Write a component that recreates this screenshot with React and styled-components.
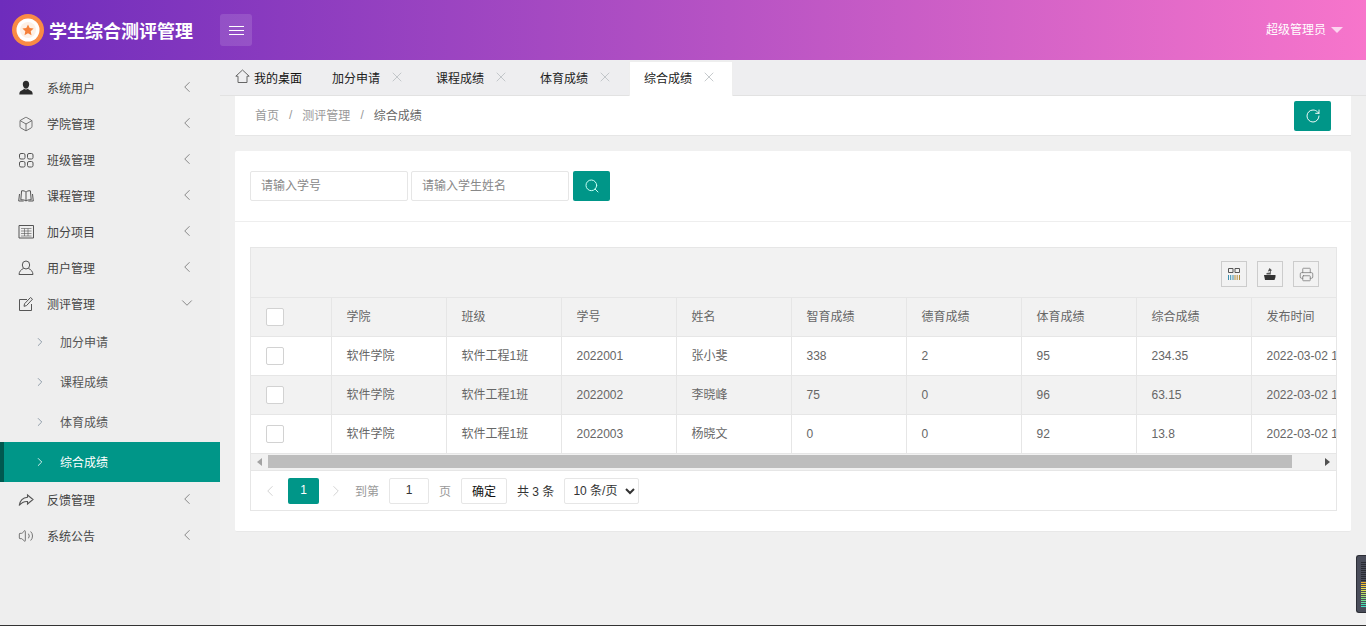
import styled, { createGlobalStyle } from 'styled-components';
import { ChevronLeft, ChevronRight, ChevronDown, X, RotateCw, Search, Box, Volume2, Printer } from 'lucide-react';

const GlobalStyle = createGlobalStyle`
  html, body { margin: 0; padding: 0; height: 100%; overflow: hidden; background: #f0f0f0; }
  body { font-family: "Liberation Sans", "Noto Sans CJK SC", sans-serif; font-size: 12px; color: #666; }
  * { box-sizing: border-box; }
`;

const Page = styled.div`
  width: 1366px;
  height: 626px;
  display: flex;
  flex-direction: column;
  overflow: hidden;
  border-bottom: 1px solid #333;
`;

const Header = styled.header`
  height: 60px;
  flex: none;
  display: flex;
  align-items: center;
  padding: 0 23px 0 12px;
  background: linear-gradient(90deg, #6e2cbc 0%, #f775cb 100%);
  color: #fff;
`;
const Logo = styled.svg`
  width: 32px;
  height: 32px;
  flex: none;
`;
const Brand = styled.div`
  width: 171px;
  margin-left: 5px;
  font-size: 18px;
  font-weight: 700;
  white-space: nowrap;
`;
const MenuButton = styled.button`
  width: 32px;
  height: 32px;
  padding: 0;
  display: flex;
  flex-direction: column;
  align-items: center;
  justify-content: center;
  gap: 3px;
  border: 0;
  border-radius: 3px;
  background: rgba(255, 255, 255, 0.13);
  span { width: 15px; height: 1px; background: #fff; }
`;
const UserBox = styled.div`
  margin-left: auto;
  padding-bottom: 3px;
  display: flex;
  align-items: center;
  gap: 5px;
`;
const Caret = styled.i`
  width: 0;
  height: 0;
  margin-top: 3px;
  border-style: solid;
  border-width: 6px 6px 0;
  border-color: rgba(255, 255, 255, 0.7) transparent transparent;
`;

const Body = styled.div`
  flex: 1;
  min-height: 0;
  display: flex;
`;

const Sidebar = styled.aside`
  width: 220px;
  flex: none;
  padding-top: 10px;
  background: #eee;
`;
const MenuRow = styled.div`
  height: 36px;
  display: flex;
  align-items: center;
  padding: 0 24px 0 18px;
  color: #444;
  svg.icon { width: 16px; height: 16px; flex: none; color: #555; }
  span { margin-left: 13px; flex: 1; padding-bottom: 2px; }
  svg.arrow { color: #666; margin-top: -3px; }
`;
const SubRow = styled.div`
  height: 40px;
  display: flex;
  align-items: center;
  padding-left: ${(p) => (p.$active ? '29px' : '33px')};
  color: ${(p) => (p.$active ? '#fff' : '#555')};
  background: ${(p) => (p.$active ? '#009688' : 'transparent')};
  border-left: ${(p) => (p.$active ? '4px solid #00594f' : '0')};
  svg { flex: none; color: ${(p) => (p.$active ? '#fff' : '#7c8c9a')}; }
  span { margin-left: 13px; padding-bottom: 2px; }
`;

const Main = styled.main`
  flex: 1;
  min-width: 0;
  display: flex;
  flex-direction: column;
`;
const TabBar = styled.div`
  height: 36px;
  flex: none;
  display: flex;
  padding-top: 2px;
  background: #eeeef0;
  border-bottom: 1px solid #e2e2e2;
`;
const HomeTab = styled.div`
  width: 98px;
  display: flex;
  align-items: center;
  gap: 4px;
  padding: 0 0 3px 15px;
  color: #111;
  svg { color: #666; margin-top: -2px; }
`;
const Tab = styled.div`
  width: 102px;
  height: ${(p) => (p.$active ? '35px' : '33px')};
  margin-right: 2px;
  display: flex;
  align-items: center;
  padding: 0 0 ${(p) => (p.$active ? '5px' : '3px')} 14px;
  color: #222;
  background: ${(p) => (p.$active ? '#fff' : 'transparent')};
  box-shadow: ${(p) => (p.$active ? '0 0 0 1px #eee' : 'none')};
  svg { margin-left: 9px; color: #b8bcc0; }
`;

const Content = styled.div`
  flex: 1;
  padding: 0 15px;
  background: #f0f0f0;
`;
const Crumbs = styled.div`
  height: 40px;
  display: flex;
  align-items: center;
  padding: 0 20px;
  background: #fff;
  border-bottom: 1px solid #e6e6e6;
  color: #999;
`;
const CrumbText = styled.span`
  padding-bottom: 2px;
  color: ${(p) => (p.$current ? '#666' : '#999')};
`;
const Sep = styled.span`
  margin: 0 10px;
  padding-bottom: 2px;
  color: #999;
`;
const TealButton = styled.button`
  width: 37px;
  height: 30px;
  padding: 0;
  display: flex;
  align-items: center;
  justify-content: center;
  border: 0;
  border-radius: 2px;
  color: #fff;
  background: #009688;
`;
const RefreshButton = styled(TealButton)`
  margin-left: auto;
`;

const Card = styled.section`
  margin-top: 15px;
  height: 381px;
  background: #fff;
  border-radius: 2px;
  border-bottom: 1px solid #e8e8e8;
`;
const SearchBar = styled.div`
  height: 71px;
  display: flex;
  align-items: center;
  padding: 0 15px 1px;
  border-bottom: 1px solid #eee;
`;
const SearchInput = styled.input`
  width: 158px;
  height: 30px;
  margin-right: 3px;
  padding: 0 10px;
  border: 1px solid #e6e6e6;
  border-radius: 2px;
  font: inherit;
  color: #666;
  outline: none;
  &::placeholder { color: #888; opacity: 1; }
`;
const SearchButton = styled(TealButton)`
  margin-left: 1px;
  color: #c8fff5;
`;

const TableBox = styled.div`
  width: 1087px;
  margin: 25px 0 0 15px;
  border: 1px solid #e6e6e6;
`;
const Toolbar = styled.div`
  height: 50px;
  display: flex;
  align-items: center;
  justify-content: flex-end;
  gap: 10px;
  padding: 3px 17px 0 0;
  background: #f2f2f2;
  border-bottom: 1px solid #e6e6e6;
`;
const ToolButton = styled.div`
  width: 26px;
  height: 26px;
  display: flex;
  align-items: center;
  justify-content: center;
  border: 1px solid #ccc;
  color: #555;
`;
const TableClip = styled.div`
  overflow: hidden;
`;
const Table = styled.table`
  width: 1200px;
  table-layout: fixed;
  border-collapse: collapse;
`;
const Col = styled.col`
  width: ${(p) => p.$w}px;
`;
const Cell = styled.td`
  height: 39px;
  padding: 0 15px;
  line-height: 18px;
  border-right: 1px solid #e6e6e6;
  border-bottom: 1px solid #e6e6e6;
  color: #666;
  white-space: nowrap;
  overflow: hidden;
  &:last-child { border-right: 0; }
`;
const HeadRow = styled.tr`
  background: #f2f2f2;
  td { height: 38px; }
`;
const Row = styled.tr`
  background: ${(p) => (p.$alt ? '#f2f2f2' : '#fff')};
`;
const CheckBox = styled.i`
  display: block;
  width: 18px;
  height: 18px;
  background: #fff;
  border: 1px solid #d2d2d2;
  border-radius: 2px;
`;

const ScrollTrack = styled.div`
  height: 17px;
  display: flex;
  align-items: center;
  background: #f1f1f1;
  border-bottom: 1px solid #e6e6e6;
`;
const ScrollArrow = styled.div`
  width: 17px;
  flex: none;
  display: flex;
  justify-content: center;
  i {
    width: 0;
    height: 0;
    border-style: solid;
    border-width: ${(p) => (p.$right ? '4px 0 4px 5px' : '4px 5px 4px 0')};
    border-color: ${(p) => (p.$right ? 'transparent transparent transparent #505050' : 'transparent #a3a3a3 transparent transparent')};
  }
`;
const ScrollThumb = styled.div`
  flex: 1;
  height: 13px;
  margin-right: 27px;
  background: #bdbdbd;
`;

const Pager = styled.div`
  height: 39px;
  display: flex;
  align-items: center;
  padding: 2px 0 0 10px;
  color: #999;
`;
const PageArrow = styled.div`
  width: ${(p) => (p.$next ? '26px' : '27px')};
  display: flex;
  justify-content: ${(p) => (p.$next ? 'flex-end' : 'flex-start')};
  color: #cfcfcf;
`;
const PageNum = styled.div`
  width: 31px;
  height: 26px;
  padding-bottom: 2px;
  display: flex;
  align-items: center;
  justify-content: center;
  border-radius: 2px;
  background: #009688;
  color: #fff;
`;
const PageLabel = styled.span`
  margin: 0 10px;
  padding-bottom: 2px;
  color: ${(p) => (p.$dark ? '#333' : '#999')};
`;
const PageInput = styled.input`
  width: 40px;
  height: 26px;
  border: 1px solid #e6e6e6;
  border-radius: 2px;
  padding: 0 0 2px;
  text-align: center;
  font: inherit;
  color: #333;
  outline: none;
`;
const ConfirmButton = styled.button`
  width: 46px;
  height: 26px;
  padding: 0 0 2px;
  background: #fff;
  border: 1px solid #e6e6e6;
  border-radius: 2px;
  font: inherit;
  color: #111;
`;
const SizeSelect = styled.select`
  width: 75px;
  height: 26px;
  padding: 0 0 0 4px;
  background: #fff;
  border: 1px solid #e6e6e6;
  border-radius: 2px;
  font: inherit;
  color: #333;
  outline: none;
`;

const Meter = styled.div`
  position: absolute;
  left: 1356px;
  top: 555px;
  width: 10px;
  height: 58px;
  display: flex;
  flex-direction: column;
  gap: 1px;
  padding: 6px 0 0 4px;
  background: #4a4d5a;
  border: 1px solid #2c2e36;
  border-right: 0;
  border-radius: 3px 0 0 3px;
`;
const MeterBar = styled.i`
  display: block;
  height: 1px;
  background: ${(p) => p.$color};
`;

const PersonFilled = () => (
  <svg className="icon" viewBox="0 0 16 16" fill="#2b2b2b">
    <path d="M8 .8c2 0 3.200 1.500 3.200 3.500S10 8.700 8 8.700 4.800 6.300 4.800 4.300 6 .8 8 .8zM5.900 8.600c.6.6 1.300 1 2.100 1s1.500-.4 2.100-1c.2 1 .5 1.300 2.300 2 1.500.6 2.200 1.300 2.300 3.900H1.300c.1-2.600.8-3.300 2.300-3.900 1.800-.7 2.100-1 2.300-2z" />
  </svg>
);
const GridIcon = () => (
  <svg className="icon" viewBox="0 0 16 16" fill="none" stroke="currentColor" strokeWidth="1">
    <rect x="1.500" y="1.500" width="5.500" height="5.500" rx="1.500" />
    <rect x="9.500" y="1.500" width="5.500" height="5.500" rx="1.500" />
    <rect x="1.500" y="9.500" width="5.500" height="5.500" rx="1.500" />
    <rect x="9.500" y="9.500" width="5.500" height="5.500" rx="1.500" />
  </svg>
);
const BookIcon = () => (
  <svg className="icon" viewBox="0 0 16 16" fill="none" stroke="currentColor" strokeWidth="1">
    <path d="M8 4.200C7 3 5.600 2.600 3.600 2.800L2.800 11.800c2-.2 3.800.1 5.200 1.200 1.400-1.100 3.200-1.400 5.200-1.200L12.400 2.800C10.400 2.600 9 3 8 4.200zM8 4.200V13" />
    <path d="M1.500 6L.7 13h5M14.500 6l.8 7h-5" />
  </svg>
);
const TableIcon = () => (
  <svg className="icon" viewBox="0 0 16 16" fill="none" stroke="currentColor" strokeWidth="1">
    <path d="M1 1.500h14.500v12.500H1z" />
    <path d="M3 4.500h10.500M3 7h10.500M3 9.500h10.500M3 12h10.500M6.500 4.500v7.500M10 4.500v7.500" opacity=".6" />
  </svg>
);
const PersonOutline = () => (
  <svg className="icon" viewBox="0 0 16 16" fill="none" stroke="currentColor" strokeWidth="1">
    <ellipse cx="8" cy="5" rx="3.700" ry="4" />
    <path d="M5.500 8.500C3 9.500 1.200 11.500 1 14.500h14C14.800 11.500 13 9.500 10.500 8.500" />
  </svg>
);
const EditIcon = () => (
  <svg className="icon" viewBox="0 0 16 16" fill="none" stroke="currentColor" strokeWidth="1">
    <path d="M9 3.500H1.500v11h12V8" />
    <path d="M6 10.300l.5-2.500 6-6.300 2 1.700-6 6.400z" />
  </svg>
);
const ShareIcon = () => (
  <svg className="icon" viewBox="0 0 16 16" fill="none" stroke="currentColor" strokeWidth="1.100">
    <path d="M9.500 3l5.500 4.500L9.500 12V9.500C6 9.300 3.500 10.500 1.200 13.500 2 8.500 5 5.700 9.500 5.300z" />
  </svg>
);
const HomeIcon = () => (
  <svg width="15" height="15" viewBox="0 0 15 15" fill="none" stroke="currentColor" strokeWidth="1">
    <path d="M7.500 1L.8 7.200h2.200v6.300h9V7.200h2.200z" />
  </svg>
);
const ColsIcon = () => (
  <svg width="14" height="14" viewBox="0 0 14 14" fill="none" stroke="#555">
    <path d="M1.500 1.500h4.500v4H1.500zM8 1.500h4.500v4H8z" />
    <path d="M1.500 8v5M3.700 8v5M6 8v5" stroke="#3a8fb0" />
    <path d="M8 8v5M10.200 8v5M12.500 8v5" stroke="#b08a3a" />
  </svg>
);
const ExportIcon = () => (
  <svg width="14" height="14" viewBox="0 0 14 14">
    <path d="M1 8h11.500v2l-1 3H2z" fill="#333" />
    <path d="M3.500 7.500V6l3.500-.5V4L4.800 4.500 6.500 1 9 3.300 7.800 4v3.500z" fill="#555" />
  </svg>
);

const menuTop = [
  { name: '系统用户', icon: <PersonFilled /> },
  { name: '学院管理', icon: <Box className="icon" strokeWidth={1.2} /> },
  { name: '班级管理', icon: <GridIcon /> },
  { name: '课程管理', icon: <BookIcon /> },
  { name: '加分项目', icon: <TableIcon /> },
  { name: '用户管理', icon: <PersonOutline /> },
];
const menuBottom = [
  { name: '反馈管理', icon: <ShareIcon /> },
  { name: '系统公告', icon: <Volume2 className="icon" strokeWidth={1.2} /> },
];
const subMenu = ['加分申请', '课程成绩', '体育成绩', '综合成绩'];
const columns = ['学院', '班级', '学号', '姓名', '智育成绩', '德育成绩', '体育成绩', '综合成绩', '发布时间'];
const rows = [
  ['软件学院', '软件工程1班', '2022001', '张小斐', '338', '2', '95', '234.35', '2022-03-02 10:21:36'],
  ['软件学院', '软件工程1班', '2022002', '李晓峰', '75', '0', '96', '63.15', '2022-03-02 10:21:36'],
  ['软件学院', '软件工程1班', '2022003', '杨晓文', '0', '0', '92', '13.8', '2022-03-02 10:21:36'],
];
const meterColors = ['#2a2c33', '#2a2c33', '#2a2c33', '#2a2c33', '#2a2c33', '#2a2c33', '#2a2c33', '#2a2c33', '#2a2c33', '#2a2c33', '#f0b429', '#f0c030', '#f0d040', '#e8e050', '#d8e050', '#c8e060', '#b0e068', '#a0e070', '#80e080', '#70e090', '#60e0a0', '#40e0b0', '#40e0c0'];

const MenuItem = ({ item, open }) => (
  <MenuRow>
    {item.icon}
    <span>{item.name}</span>
    {open ? <ChevronDown className="arrow" size={18} strokeWidth={1} /> : <ChevronLeft className="arrow" size={18} strokeWidth={1} />}
  </MenuRow>
);

const App = () => (
  <>
    <GlobalStyle />
    <Page>
      <Header>
        <Logo viewBox="0 0 32 32">
          <circle cx="16" cy="16" r="16" fill="#f98b45" />
          <circle cx="16" cy="16" r="11.500" fill="#fff" />
          <circle cx="16" cy="16" r="8" fill="#fdf0e6" />
          <path d="M16 10.500l1.700 3.600 3.900.5-2.900 2.700.8 3.900-3.500-2-3.500 2 .8-3.900-2.900-2.700 3.900-.5z" fill="#f5803a" />
        </Logo>
        <Brand>学生综合测评管理</Brand>
        <MenuButton>
          <span />
          <span />
          <span />
        </MenuButton>
        <UserBox>
          超级管理员
          <Caret />
        </UserBox>
      </Header>
      <Body>
        <Sidebar>
          {menuTop.map((item) => (
            <MenuItem key={item.name} item={item} />
          ))}
          <MenuItem item={{ name: '测评管理', icon: <EditIcon /> }} open />
          {subMenu.map((name, i) => (
            <SubRow key={name} $active={i === 3}>
              <ChevronRight size={14} strokeWidth={1.4} />
              <span>{name}</span>
            </SubRow>
          ))}
          {menuBottom.map((item) => (
            <MenuItem key={item.name} item={item} />
          ))}
        </Sidebar>
        <Main>
          <TabBar>
            <HomeTab>
              <HomeIcon />
              我的桌面
            </HomeTab>
            {subMenu.map((name, i) => (
              <Tab key={name} $active={i === 3}>
                {name}
                <X size={16} strokeWidth={1.2} />
              </Tab>
            ))}
          </TabBar>
          <Content>
            <Crumbs>
              <CrumbText>首页</CrumbText>
              <Sep>/</Sep>
              <CrumbText>测评管理</CrumbText>
              <Sep>/</Sep>
              <CrumbText $current>综合成绩</CrumbText>
              <RefreshButton>
                <RotateCw size={16} strokeWidth={1.4} />
              </RefreshButton>
            </Crumbs>
            <Card>
              <SearchBar>
                <SearchInput placeholder="请输入学号" />
                <SearchInput placeholder="请输入学生姓名" />
                <SearchButton>
                  <Search size={16} strokeWidth={1.5} />
                </SearchButton>
              </SearchBar>
              <TableBox>
                <Toolbar>
                  <ToolButton>
                    <ColsIcon />
                  </ToolButton>
                  <ToolButton>
                    <ExportIcon />
                  </ToolButton>
                  <ToolButton>
                    <Printer size={15} strokeWidth={1.2} color="#777" />
                  </ToolButton>
                </Toolbar>
                <TableClip>
                  <Table>
                    <colgroup>
                      <Col $w={80} />
                      {columns.map((c, i) => (
                        <Col key={c} $w={i === 8 ? 200 : 115} />
                      ))}
                    </colgroup>
                    <tbody>
                      <HeadRow>
                        <Cell>
                          <CheckBox />
                        </Cell>
                        {columns.map((c) => (
                          <Cell key={c}>{c}</Cell>
                        ))}
                      </HeadRow>
                      {rows.map((r, i) => (
                        <Row key={r[2]} $alt={i === 1}>
                          <Cell>
                            <CheckBox />
                          </Cell>
                          {r.map((v, j) => (
                            <Cell key={j}>{v}</Cell>
                          ))}
                        </Row>
                      ))}
                    </tbody>
                  </Table>
                </TableClip>
                <ScrollTrack>
                  <ScrollArrow>
                    <i />
                  </ScrollArrow>
                  <ScrollThumb />
                  <ScrollArrow $right>
                    <i />
                  </ScrollArrow>
                </ScrollTrack>
                <Pager>
                  <PageArrow>
                    <ChevronLeft size={18} strokeWidth={1.2} />
                  </PageArrow>
                  <PageNum>1</PageNum>
                  <PageArrow $next>
                    <ChevronRight size={18} strokeWidth={1.2} />
                  </PageArrow>
                  <PageLabel>到第</PageLabel>
                  <PageInput defaultValue="1" />
                  <PageLabel>页</PageLabel>
                  <ConfirmButton>确定</ConfirmButton>
                  <PageLabel $dark>共 3 条</PageLabel>
                  <SizeSelect defaultValue="10">
                    <option value="10">10 条/页</option>
                    <option value="20">20 条/页</option>
                  </SizeSelect>
                </Pager>
              </TableBox>
            </Card>
          </Content>
        </Main>
      </Body>
      <Meter>
        {meterColors.map((c, i) => (
          <MeterBar key={i} $color={c} />
        ))}
      </Meter>
    </Page>
  </>
);

export default App;
